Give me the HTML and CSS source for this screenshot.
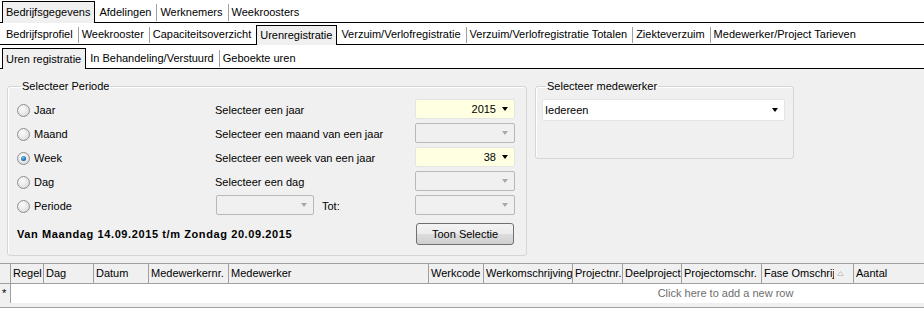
FILE: index.html
```html
<!DOCTYPE html>
<html lang="nl">
<head>
  <meta charset="UTF-8" />
  <title>Urenregistratie</title>
  <link rel="stylesheet" href="styles.css">
</head>
<body>
  <div class="tabs row-1">
    <span class="tab active">Bedrijfsgegevens</span>
    <span class="tab">Afdelingen</span>
    <span class="tab sep">Werknemers</span>
    <span class="tab sep">Weekroosters</span>
  </div>
  <div class="tabs row-2">
    <span class="tab">Bedrijfsprofiel</span>
    <span class="tab sep">Weekrooster</span>
    <span class="tab sep">Capaciteitsoverzicht</span>
    <span class="tab active">Urenregistratie</span>
    <span class="tab">Verzuim/Verlofregistratie</span>
    <span class="tab sep">Verzuim/Verlofregistratie Totalen</span>
    <span class="tab sep">Ziekteverzuim</span>
    <span class="tab sep">Medewerker/Project Tarieven</span>
  </div>
  <div class="tabs row-3">
    <span class="tab active">Uren registratie</span>
    <span class="tab">In Behandeling/Verstuurd</span>
    <span class="tab sep">Geboekte uren</span>
  </div>

  <div class="panel">
    <fieldset class="group periode">
      <legend>Selecteer Periode</legend>
      <div class="periode-grid">
        <label class="radio"><span class="dot"></span>Jaar</label>
        <span class="lbl">Selecteer een jaar</span>
        <div class="combo active"><span>2015</span><i class="arrow"></i></div>

        <label class="radio"><span class="dot"></span>Maand</label>
        <span class="lbl">Selecteer een maand van een jaar</span>
        <div class="combo disabled"><span></span><i class="arrow"></i></div>

        <label class="radio"><span class="dot checked"></span>Week</label>
        <span class="lbl">Selecteer een week van een jaar</span>
        <div class="combo active"><span>38</span><i class="arrow"></i></div>

        <label class="radio"><span class="dot"></span>Dag</label>
        <span class="lbl">Selecteer een dag</span>
        <div class="combo disabled"><span></span><i class="arrow"></i></div>

        <label class="radio"><span class="dot"></span>Periode</label>
        <div class="van-tot">
          <div class="combo disabled small"><span></span><i class="arrow"></i></div>
          <span class="lbl">Tot:</span>
        </div>
        <div class="combo disabled"><span></span><i class="arrow"></i></div>

        <div class="summary">Van Maandag 14.09.2015 t/m Zondag 20.09.2015</div>
        <button class="btn">Toon Selectie</button>
      </div>
    </fieldset>

    <fieldset class="group medewerker">
      <legend>Selecteer medewerker</legend>
      <div class="combo wide"><span>Iedereen</span><i class="arrow"></i></div>
    </fieldset>
  </div>

  <div class="grid-wrap">
    <div class="grid">
      <div class="grid-head">
        <div class="cell sel"></div>
        <div class="cell">Regel</div>
        <div class="cell">Dag</div>
        <div class="cell">Datum</div>
        <div class="cell">Medewerkernr.</div>
        <div class="cell">Medewerker</div>
        <div class="cell">Werkcode</div>
        <div class="cell">Werkomschrijving</div>
        <div class="cell">Projectnr.</div>
        <div class="cell">Deelproject</div>
        <div class="cell">Projectomschr.</div>
        <div class="cell sorted">
          <span class="cap">Fase Omschrijving</span>
          <svg class="sort" width="7" height="5" viewBox="0 0 7 5"><path d="M0.5 4.5 L3.5 0.5 L6.5 4.5 Z" fill="none" stroke="#c8c8c8" stroke-width="1"/></svg>
        </div>
        <div class="cell">Aantal</div>
      </div>
      <div class="grid-new">
        <div class="cell sel">*</div>
        <div class="cell hint">Click here to add a new row</div>
      </div>
      <div class="grid-foot"></div>
    </div>
  </div>
</body>
</html>
```

FILE: styles.css
```css
body {
  margin: 0;
  background: #fff;
  font-family: "Liberation Sans", Arial, sans-serif;
  font-size: 11px;
  color: #000;
  overflow: hidden;
}

/* tab strips */
.tabs {
  display: flex;
  align-items: flex-end;
  padding: 0 2px;
  border-bottom: 1px solid #000;
  white-space: nowrap;
}

.tab {
  position: relative;
  padding: 0 5px 0 4px;
  line-height: 20px;
}

.tab.sep::before {
  content: "";
  position: absolute;
  left: 0;
  top: 2px;
  bottom: 1px;
  width: 1px;
  background: #a0a0a0;
}

.tab.active {
  background: #f0f0f0;
  border: 1px solid #000;
  border-bottom: none;
  margin-bottom: -1px;
  padding: 0 4px 0 3px;
}

.row-1 { padding-top: 1px; height: 21px; }
.row-1 .tab { line-height: 20px; }
.row-1 .tab.active { line-height: 21px; }

.row-2 { padding-top: 2px; height: 19px; }
.row-2 .tab { line-height: 19px; }

.row-3 { padding-top: 3px; height: 20px; }
.row-3 .tab { line-height: 20px; }

/* form panel */
.panel {
  background: #f0f0f0;
  height: 194px;
  box-sizing: border-box;
  padding: 11px 7px 0;
  display: flex;
  align-items: flex-start;
  gap: 8px;
}

.group {
  margin: 0;
  border: 1px solid #d5d5d5;
  border-radius: 3px;
  box-shadow: inset 1px 1px 0 #fff;
}

.group legend {
  padding: 0 1px;
  margin-left: 4px;
  line-height: 13px;
}

.periode {
  width: 520px;
  box-sizing: border-box;
  padding: 6px 10px 10px 9px;
}

.medewerker {
  width: 259px;
  height: 79px;
  box-sizing: border-box;
  padding: 4px 8px 0 6px;
}

.periode-grid {
  display: grid;
  grid-template-columns: 198px 200px 100px;
  grid-template-rows: repeat(5, 20px) auto;
  row-gap: 4px;
  align-items: center;
}

.radio {
  display: flex;
  align-items: center;
  gap: 4px;
  margin-top: 2px;
}

.dot {
  width: 11px;
  height: 11px;
  border-radius: 50%;
  border: 1px solid #8f8f8f;
  background: radial-gradient(circle at 40% 35%, #fdfdfd 0%, #e6e6e6 55%, #cfcfcf 100%);
  position: relative;
}

.dot.checked::after {
  content: "";
  position: absolute;
  left: 3px;
  top: 3px;
  width: 5px;
  height: 5px;
  border-radius: 50%;
  background: radial-gradient(circle at 40% 35%, #6fc4f0 0%, #1d6fb0 60%, #0b3f73 100%);
}

.lbl {
  margin-top: 1px;
}

.combo {
  height: 20px;
  box-sizing: border-box;
  display: flex;
  align-items: center;
  justify-content: flex-end;
  padding: 0 6px 0 2px;
  border: 1px solid #e4e4e4;
  border-radius: 2px;
  background: #fff;
}

.combo span {
  flex: 1;
  text-align: right;
  padding-right: 6px;
}

.combo.active {
  background: #ffffe1;
}

.combo.disabled {
  background: #f0f0f0;
  border-color: #b8b8b8;
}

.arrow {
  width: 0;
  height: 0;
  border-left: 3.5px solid transparent;
  border-right: 3.5px solid transparent;
  border-top: 4px solid #000;
}

.combo.disabled .arrow {
  border-top-color: #a8a8a8;
}

.van-tot {
  display: flex;
  align-items: center;
  gap: 8px;
}

.combo.small {
  width: 98px;
  margin-left: 1px;
}

.summary {
  grid-column: 1 / 3;
  font-weight: bold;
  letter-spacing: 0.6px;
  margin-top: 4px;
}

.btn {
  height: 22px;
  width: 98px;
  margin: 4px 0 0 1px;
  font-family: inherit;
  font-size: 11px;
  border: 1px solid #707070;
  border-radius: 3px;
  background: linear-gradient(#f4f4f4 0%, #ebebeb 50%, #dddddd 51%, #cfcfcf 100%);
  padding: 0;
}

.combo.wide {
  height: 22px;
  margin-top: 2px;
  padding: 0 6px 0 2px;
}

.combo.wide span {
  text-align: left;
}

/* data grid */
.grid-wrap {
  overflow: hidden;
  width: 924px;
}

.grid {
  width: 1440px;
}

.grid-head,
.grid-new {
  display: grid;
  grid-template-columns: 11px 33px 50px 55px 80px 200px 55px 89px 50px 59px 80px 92px 1fr;
}

.grid-head {
  background: #f0f0f0;
  border-top: 1px solid #a0a0a0;
  border-bottom: 1px solid #a0a0a0;
  height: 19px;
}

.grid-head .cell {
  border-right: 1px solid #a0a0a0;
  padding-left: 2px;
  line-height: 19px;
  overflow: hidden;
  white-space: nowrap;
}

.grid-head .cell.sel {
  padding: 0;
}

.grid-head .cell.sorted {
  display: flex;
  align-items: center;
  padding-right: 9px;
}

.cap {
  flex: 1;
  overflow: hidden;
  min-width: 0;
}

.sort {
  flex: none;
  margin-left: 3px;
}

.grid-new {
  grid-template-columns: 11px 1fr;
  height: 19px;
  background: #fff;
}

.grid-new .cell {
  line-height: 19px;
}

.grid-new .cell.sel {
  background: #f0f0f0;
  border-right: 1px solid #a0a0a0;
  padding-left: 2px;
}

.hint {
  text-align: center;
  color: #6d6d6d;
}

.grid-foot {
  height: 4px;
  background: #f0f0f0;
  border-bottom: 1px solid #a0a0a0;
}
```
